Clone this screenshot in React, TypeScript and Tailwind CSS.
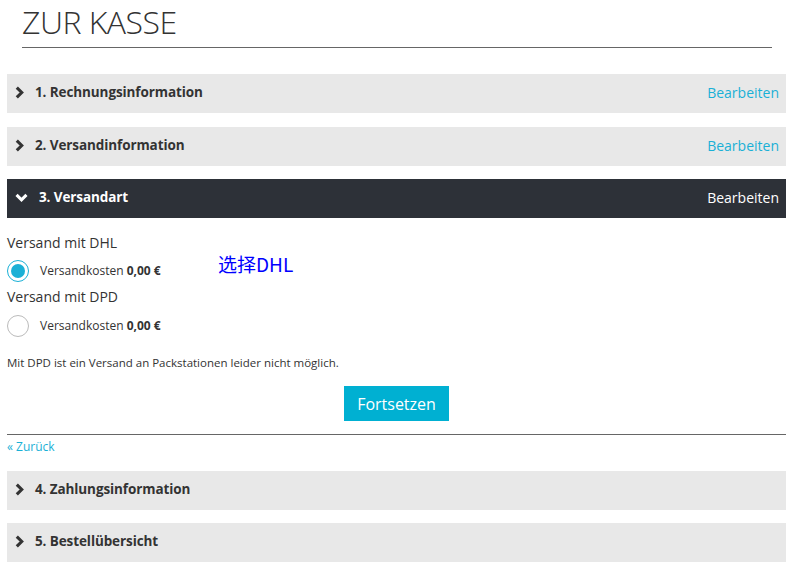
import React from 'react'

function ChevronRight({ className = '' }: { className?: string }) {
  return (
    <svg viewBox="0 0 10 14" className={className} width="9" height="13">
      <path d="M2 1.5 L7.5 7 L2 12.5" fill="none" stroke="currentColor" strokeWidth="3.4" />
    </svg>
  )
}

function ChevronDown({ className = '' }: { className?: string }) {
  return (
    <svg viewBox="0 0 14 10" className={className} width="13" height="9">
      <path d="M1.5 2 L7 7.5 L12.5 2" fill="none" stroke="currentColor" strokeWidth="3.4" />
    </svg>
  )
}

function StepBar({ title, edit, active }: { title: string; edit?: boolean; active?: boolean }) {
  return (
    <div
      className={`h-[39px] flex items-center justify-between pl-[8px] pr-[7px] pb-[3px] ${
        active ? 'bg-[#2d3138] text-white' : 'bg-[#e8e8e8] text-[#333]'
      }`}
    >
      <div className="flex items-center">
        {active ? <ChevronDown className="mr-[11px]" /> : <ChevronRight className="mr-[11px]" />}
        <span className="text-[13.5px] font-bold tracking-[-0.1px]">{title}</span>
      </div>
      {edit && (
        <span className={`text-[14px] ${active ? 'text-white' : 'text-[#1ab0d6]'}`}>Bearbeiten</span>
      )}
    </div>
  )
}

function Radio({ checked }: { checked?: boolean }) {
  return (
    <span
      className={`w-[22px] h-[22px] rounded-full border flex items-center justify-center bg-white ${
        checked ? 'border-[#1ab0d6]' : 'border-[#bbb]'
      }`}
    >
      {checked && <span className="w-[14px] h-[14px] rounded-full bg-[#1ab0d6]" />}
    </span>
  )
}

export default function App() {
  return (
    <div className="w-[794px] h-[571px] bg-white overflow-hidden font-['Open_Sans',sans-serif] text-[#333]">
      <div className="mx-[22px] pt-[2px] border-b border-[#666] h-[48px]">
        <h1 className="text-[32px] font-light leading-[40px] text-[#333] tracking-[-0.5px]">ZUR KASSE</h1>
      </div>

      <div className="px-[7px] pr-[8px] mt-[26px] flex flex-col">
        <StepBar title="1. Rechnungsinformation" edit />
        <div className="h-[14px]" />
        <StepBar title="2. Versandinformation" edit />
        <div className="h-[13px]" />
        <StepBar title="3. Versandart" edit active />

        <div className="relative pt-[16px]">
          <div className="text-[14px] leading-[18px]">Versand mit DHL</div>
          <div className="flex items-center h-[28px] mt-[5px]">
            <Radio checked />
            <span className="ml-[11px] text-[12px]">
              Versandkosten <b>0,00 €</b>
            </span>
          </div>
          <div className="text-[14px] leading-[18px] mt-[3px]">Versand mit DPD</div>
          <div className="flex items-center h-[28px] mt-[6px]">
            <Radio />
            <span className="ml-[11px] text-[12px]">
              Versandkosten <b>0,00 €</b>
            </span>
          </div>
          <div className="text-[11.5px] mt-[15px] leading-[16px]">
            Mit DPD ist ein Versand an Packstationen leider nicht möglich.
          </div>
          <div className="flex justify-center mt-[15px]">
            <button className="h-[35px] w-[105px] bg-[#00b0d2] text-white text-[16px]">Fortsetzen</button>
          </div>
          <div className="border-b border-[#666] mt-[13px]" />
          <div className="text-[12px] text-[#1ab0d6] mt-[4px] leading-[16px]">« Zurück</div>

          <span className="absolute left-[211px] top-[32px] text-[19px] text-[#0000ff] font-['Noto_Sans_CJK_SC',sans-serif]">
            选择DHL
          </span>
        </div>

        <div className="h-[16px]" />
        <StepBar title="4. Zahlungsinformation" />
        <div className="h-[13px]" />
        <StepBar title="5. Bestellübersicht" />
      </div>
    </div>
  )
}
